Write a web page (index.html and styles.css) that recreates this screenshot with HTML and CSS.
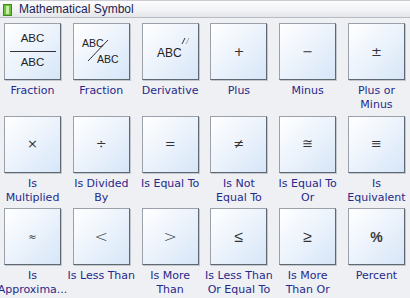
FILE: index.html
```html
<!DOCTYPE html>
<html>
<head>
<meta charset="utf-8">
<link rel="stylesheet" href="styles.css">
</head>
<body>
<div class="header">
  <svg class="hicon" width="9" height="12" viewBox="0 0 9 12"><rect x="0.5" y="0.5" width="8" height="11" fill="#6cc23a" stroke="#3f8a1c"/><rect x="3" y="2" width="3" height="8" fill="#c8f0a8"/></svg>
  <span class="title">Mathematical Symbol</span>
</div>
<div class="grid">
  <div class="cell">
    <div class="btn frac">
      <span class="abc">ABC</span>
      <span class="bar"></span>
      <span class="abc">ABC</span>
    </div>
    <div class="label">Fraction</div>
  </div>
  <div class="cell">
    <div class="btn">
      <svg width="55" height="55" viewBox="0 0 55 55">
        <text x="8" y="23" class="svgtxt">ABC</text>
        <line x1="14" y1="37" x2="34" y2="16" stroke="#333" stroke-width="1"/>
        <text x="23" y="39" class="svgtxt">ABC</text>
      </svg>
    </div>
    <div class="label">Fraction</div>
  </div>
  <div class="cell">
    <div class="btn">
      <svg width="55" height="55" viewBox="0 0 55 55">
        <text x="14" y="33" class="svgtxt big">ABC</text>
        <line x1="39" y1="20" x2="42" y2="14" stroke="#333" stroke-width="1"/>
        <line x1="43" y1="20" x2="46" y2="14" stroke="#aaa" stroke-width="1"/>
      </svg>
    </div>
    <div class="label">Derivative</div>
  </div>
  <div class="cell">
    <div class="btn"><span class="sym">+</span></div>
    <div class="label">Plus</div>
  </div>
  <div class="cell">
    <div class="btn"><span class="sym">−</span></div>
    <div class="label">Minus</div>
  </div>
  <div class="cell">
    <div class="btn"><span class="sym">±</span></div>
    <div class="label">Plus or<br>Minus</div>
  </div>

  <div class="cell">
    <div class="btn"><span class="sym">×</span></div>
    <div class="label">Is<br>Multiplied</div>
  </div>
  <div class="cell">
    <div class="btn"><span class="sym">÷</span></div>
    <div class="label">Is Divided<br>By</div>
  </div>
  <div class="cell">
    <div class="btn"><span class="sym">=</span></div>
    <div class="label">Is Equal To</div>
  </div>
  <div class="cell">
    <div class="btn"><span class="sym">≠</span></div>
    <div class="label">Is Not<br>Equal To</div>
  </div>
  <div class="cell">
    <div class="btn"><span class="sym">≅</span></div>
    <div class="label">Is Equal To<br>Or</div>
  </div>
  <div class="cell">
    <div class="btn"><span class="sym">≡</span></div>
    <div class="label">Is<br>Equivalent</div>
  </div>

  <div class="cell">
    <div class="btn"><span class="sym small">≈</span></div>
    <div class="label">Is<br>Approxima...</div>
  </div>
  <div class="cell">
    <div class="btn"><span class="sym large">&lt;</span></div>
    <div class="label">Is Less Than</div>
  </div>
  <div class="cell">
    <div class="btn"><span class="sym large">&gt;</span></div>
    <div class="label">Is More<br>Than</div>
  </div>
  <div class="cell">
    <div class="btn"><span class="sym large">≤</span></div>
    <div class="label">Is Less Than<br>Or Equal To</div>
  </div>
  <div class="cell">
    <div class="btn"><span class="sym large">≥</span></div>
    <div class="label">Is More<br>Than Or</div>
  </div>
  <div class="cell">
    <div class="btn"><span class="sym pct">%</span></div>
    <div class="label">Percent</div>
  </div>
</div>
</body>
</html>
```

FILE: styles.css
```css
html, body {
  margin: 0;
  padding: 0;
}
body {
  width: 410px;
  height: 298px;
  overflow: hidden;
  background: #eef0f4;
  font-family: "DejaVu Sans", sans-serif;
}
.header {
  height: 18px;
  box-sizing: border-box;
  display: flex;
  align-items: center;
  padding-left: 3px;
  background: linear-gradient(#fdfdfe, #f2f3f5 55%, #e3e5e9);
  border-top: 1px solid #c9ccd1;
  border-bottom: 1px solid #b9bdc3;
}
.hicon {
  display: block;
  margin-top: 1px;
}
.title {
  margin-left: 7px;
  font-family: "Liberation Sans", Arial, sans-serif;
  font-size: 12px;
  color: #1c1c52;
  line-height: 14px;
}
.grid {
  display: grid;
  grid-template-columns: repeat(6, 57px);
  column-gap: 11.8px;
  row-gap: 3.6px;
  padding: 5px 0 0 4px;
}
.cell {
  display: flex;
  flex-direction: column;
  align-items: center;
}
.btn {
  width: 57px;
  height: 57px;
  box-sizing: border-box;
  border: 1px solid #9aa1aa;
  border-right-color: #5f6771;
  border-bottom-color: #5f6771;
  box-shadow: 1px 1px 0 #c3c8cf;
  background: linear-gradient(135deg, #ffffff 0%, #eef4fc 45%, #d6e6f8 100%);
  display: flex;
  align-items: center;
  justify-content: center;
  color: #333;
}
.btn svg {
  display: block;
}
.frac {
  flex-direction: column;
  justify-content: flex-start;
  padding-top: 8px;
}
.abc {
  font-family: "Liberation Sans", Arial, sans-serif;
  font-size: 11.5px;
  line-height: 13px;
  color: #222;
}
.bar {
  display: block;
  width: 46px;
  height: 1px;
  background: #333;
  margin: 6px 0 4px;
}
.svgtxt {
  font-family: "Liberation Sans", Arial, sans-serif;
  font-size: 10.5px;
  fill: #222;
}
.svgtxt.big {
  font-size: 12px;
}
.sym {
  font-family: "DejaVu Sans", sans-serif;
  font-size: 13px;
  line-height: 14px;
  color: #333;
}
.sym.small {
  font-size: 10px;
}
.sym.large {
  font-size: 16px;
  font-weight: 300;
}
.sym.pct {
  font-size: 14px;
  font-family: "Liberation Sans", Arial, sans-serif;
  font-weight: bold;
  color: #3a3a3a;
}
.label {
  margin-top: 4px;
  width: 74px;
  height: 28px;
  line-height: 14px;
  font-size: 11px;
  text-align: center;
  white-space: nowrap;
  color: #28298a;
}
```
